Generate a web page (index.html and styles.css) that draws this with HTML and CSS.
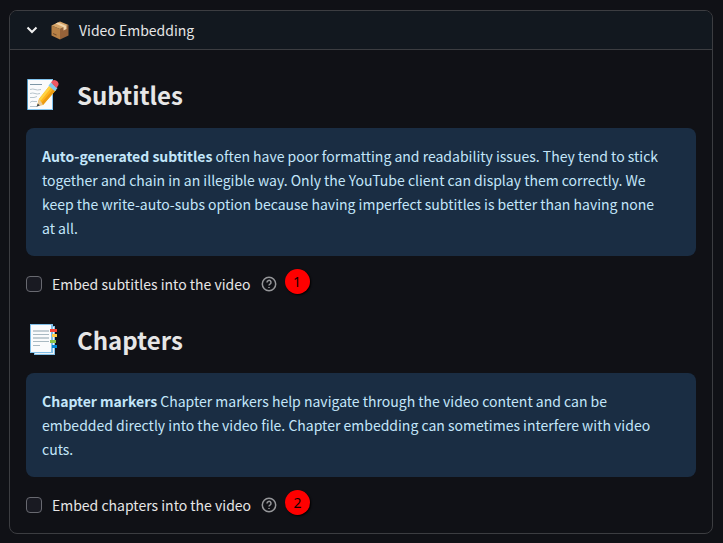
FILE: index.html
```html
<!DOCTYPE html>
<html lang="en">
<head>
<meta charset="utf-8">
<meta name="viewport" content="width=device-width, initial-scale=1">
<title>Video Embedding</title>
<link rel="stylesheet" href="styles.css">
</head>
<body>
<details class="panel" open>
  <summary class="panel-head">
    <svg class="chevron" viewBox="0 0 12 12" aria-hidden="true"><path d="M1.500 3.500L6 8l4.500-4.500"/></svg>
    <svg class="box-icon" viewBox="0 0 20 20" aria-hidden="true">
      <path fill="#b78146" d="M1.500 5.500L10 9v10.500L1.500 15.500z"/>
      <path fill="#966239" d="M10 9l8.500-4v10.500L10 19.500z"/>
      <path fill="#d6a568" d="M1.500 5.500L10 1.500 18.500 5 10 9z"/>
      <path fill="#f1d4aa" d="M5.500 3.600L8 2.400 16.500 6v3l-3 1.400V7.300z"/>
      <path fill="#76502f" d="M3 13l3.500 1.500v1.200L3 14z"/>
    </svg>
    <span>Video Embedding</span>
  </summary>
  <div class="panel-body">
    <section class="group">
      <h2 class="heading">
        <svg class="heading-icon" viewBox="0 0 36 36" aria-hidden="true">
          <path fill="#81c4ee" d="M1 2h26v31H1z"/>
          <path fill="#4f94bd" d="M1 2h1v31H1z"/>
          <path fill="#fafbfc" d="M2 3h24v29H2z"/>
          <path stroke="#7e97a6" stroke-width="1" fill="none" d="M4 7.500h12"/>
          <path stroke="#b7c4cc" stroke-width="1" fill="none" d="M4 12.500q3-1 5 0t6 0M4 16.500q3-1 5 0t5 0M4 20.500h4l3-1M4 25.500q2-2 4-1l3 0M4 29.500h7"/>
          <path fill="#ffb51e" d="M24 8l6 5-13 15-6 1 2-7z"/>
          <path fill="#ffd445" d="M24 8l2 1.700L14.500 24 13 22z"/>
          <path fill="#ed9b12" d="M28 11.300l2 1.700-13 15-1.700-2z"/>
          <path fill="#e9cb9c" d="M13 22l4 5.500-6 2z"/>
          <path fill="#39444c" d="M11.800 26.500l2 2-3.300 1.300z"/>
          <path fill="#85cbed" d="M22.500 8.500l2.500-3 6.500 5.500-2.500 3.300z"/>
          <path fill="#ee5763" d="M25 5.500Q27 2 30 3.500t2.500 4.500l-2 3z"/>
        </svg>
        <span>Subtitles</span>
      </h2>
      <p class="notice"><strong>Auto-generated subtitles</strong> often have poor formatting and readability issues. They tend to stick together and chain in an illegible way. Only the YouTube client can display them correctly. We keep the write-auto-subs option because having imperfect subtitles is better than having none at all.</p>
      <div class="option">
        <input class="check" type="checkbox" id="embed-subtitles">
        <label for="embed-subtitles">Embed subtitles into the video</label>
        <svg class="help" viewBox="0 0 16 16" aria-hidden="true"><circle cx="8" cy="8" r="6.700"/><path d="M6 6.500a2 2 0 1 1 3 1.600c-.7.400-1 .6-1 1.300M8 11v1"/></svg>
        <span class="badge">1</span>
      </div>
    </section>
    <section class="group">
      <h2 class="heading">
        <svg class="heading-icon" viewBox="0 0 36 36" aria-hidden="true">
          <path fill="#83c1e8" d="M8 4h21v29H8z"/>
          <path fill="#eef3f6" d="M9 5h19v27H9z"/>
          <path fill="#80bfe8" d="M4 2h23v29H4z"/>
          <path fill="#fafbfc" d="M5 3h20v27H5z"/>
          <path stroke="#c3ced4" stroke-width="2" d="M7 9h16M7 16h16"/>
          <path stroke="#a9b9c2" stroke-width="1" d="M7 12.500h16M7 19.500h16M7 23.500h7"/>
          <path fill="#f44336" d="M24 7h7v3h-7z"/>
          <path fill="#ffca42" d="M26 12h5v3h-5z"/>
          <path fill="#8bc34a" d="M24 18h6v3h-6z"/>
          <path fill="#0288d1" d="M26 23h5v3h-5z"/>
        </svg>
        <span>Chapters</span>
      </h2>
      <p class="notice"><strong>Chapter markers</strong> Chapter markers help navigate through the video content and can be embedded directly into the video file. Chapter embedding can sometimes interfere with video cuts.</p>
      <div class="option">
        <input class="check" type="checkbox" id="embed-chapters">
        <label for="embed-chapters">Embed chapters into the video</label>
        <svg class="help" viewBox="0 0 16 16" aria-hidden="true"><circle cx="8" cy="8" r="6.700"/><path d="M6 6.500a2 2 0 1 1 3 1.600c-.7.400-1 .6-1 1.300M8 11v1"/></svg>
        <span class="badge">2</span>
      </div>
    </section>
  </div>
</details>
</body>
</html>
```
FILE: styles.css
```css
* { box-sizing: border-box; }

body {
  margin: 0;
  padding: 10px 10px 9px 9px;
  background: #101116;
  color: #e6e6e6;
  font: 14px/24px "Source Sans Pro", "Noto Sans CJK SC", sans-serif;
}

.panel {
  border: 1px solid #3c3d41;
  border-radius: 8px;
  overflow: hidden;
}

.panel-head {
  display: flex;
  align-items: center;
  height: 39px;
  padding: 0 16px;
  border-bottom: 1px solid #3c3d41;
  background: #12181f;
  list-style: none;
  cursor: pointer;
}

.panel-head::-webkit-details-marker { display: none; }

.chevron {
  width: 12px;
  height: 12px;
  fill: none;
  stroke: #f0f0f0;
  stroke-width: 2;
}

.box-icon {
  width: 20px;
  height: 20px;
  margin: 0 9px 0 12px;
}

.panel-body {
  display: flex;
  flex-direction: column;
  gap: 27px;
  padding: 28px 16px 16px;
}

.heading {
  display: flex;
  align-items: center;
  gap: 15px;
  height: 34px;
  margin: 0 0 16px;
  font-size: 24px;
  line-height: 34px;
  font-weight: 700;
}

.heading-icon {
  width: 36px;
  height: 36px;
}

.notice {
  margin: 0;
  padding: 16px 32px 16px 16px;
  border-radius: 8px;
  background: #1a2d43;
  color: #c3e6fa;
}

.option {
  display: flex;
  align-items: center;
  height: 24px;
  margin-top: 16px;
}

.check {
  appearance: none;
  width: 16px;
  height: 16px;
  margin: 0 10px 0 0;
  border: 1px solid #686970;
  border-radius: 4px;
  background: #191a22;
}

.check:checked { background: #ff4b4b; }

.help {
  width: 16px;
  height: 16px;
  margin-left: 10px;
  fill: none;
  stroke: #96979a;
  stroke-width: 1.5;
}

.badge {
  width: 25px;
  height: 25px;
  margin: 0 0 5px 8px;
  border-radius: 50%;
  background: #ff0000;
  box-shadow: 1px 1px 2px #000000;
  color: #100000;
  font: 14px/25px "Noto Sans", sans-serif;
  text-align: center;
}
```
